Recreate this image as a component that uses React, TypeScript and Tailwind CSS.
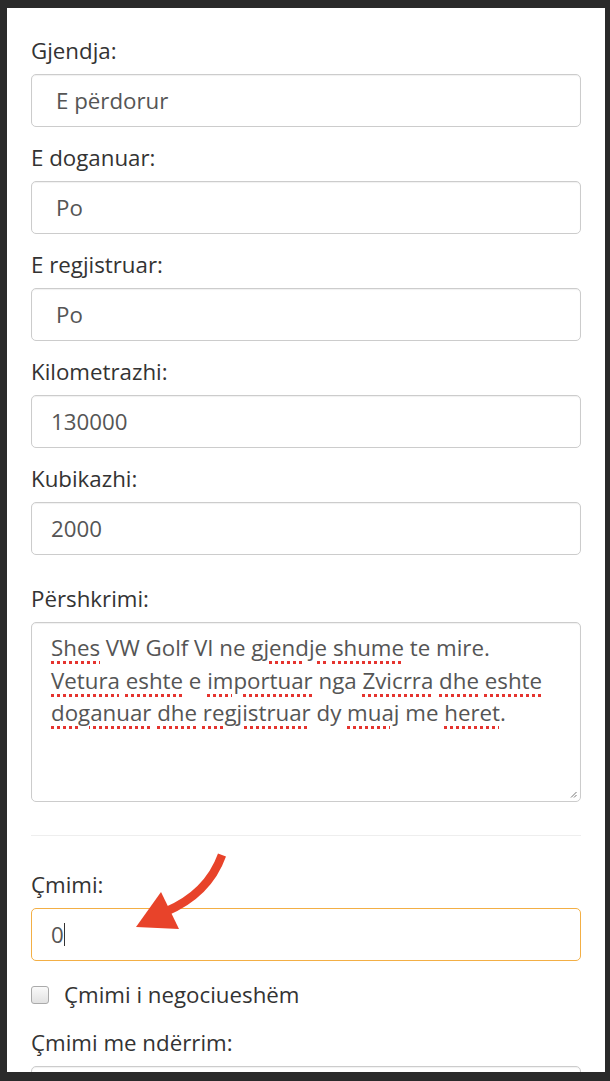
import React from 'react'

const font = { fontFamily: '"Open Sans", "Noto Sans", sans-serif' }

const Label = ({ children, className = '' }: { children: React.ReactNode; className?: string }) => (
  <label className={`block text-[22.3px] leading-[31px] text-[#333] mb-[8px] ${className}`}>{children}</label>
)

const Select = ({ value }: { value: string }) => (
  <div className="h-[53px] rounded-[5px] border border-[#ccc] flex items-center pl-[24px] text-[22.3px] text-[#555] bg-white shadow-[inset_0_1px_1px_rgba(0,0,0,0.06)]">
    {value}
  </div>
)

const Input = ({ value }: { value: string }) => (
  <div className="h-[53px] rounded-[5px] border border-[#ccc] flex items-center pl-[19px] text-[22.3px] text-[#555] bg-white shadow-[inset_0_1px_1px_rgba(0,0,0,0.06)]">
    {value}
  </div>
)

const Typo = ({ children }: { children: React.ReactNode }) => (
  <span className="underline decoration-dotted decoration-[#e5342f] decoration-[3px] underline-offset-[5px]">{children}</span>
)

const Arrow = () => (
  <svg className="absolute left-0 top-0 pointer-events-none" width="610" height="1081" viewBox="0 0 610 1081">
    <path d="M222 855 Q 208 894 165 912" stroke="#e8432a" strokeWidth="8.5" fill="none" strokeLinecap="butt" />
    <polygon points="136,927 161,892 179,929" fill="#e8432a" />
  </svg>
)

const App = () => {
  return (
    <div className="relative h-[1081px] w-[610px] bg-[#2a2a2a] pt-[8px] pl-[7px] pr-[5px] pb-[9px]" style={font}>
      <div className="h-full bg-white overflow-hidden px-[24px] pt-[27px]">
        <Label>Gjendja:</Label>
        <Select value="E përdorur" />

        <Label className="mt-[15px]">E doganuar:</Label>
        <Select value="Po" />

        <Label className="mt-[15px]">E regjistruar:</Label>
        <Select value="Po" />

        <Label className="mt-[15px]">Kilometrazhi:</Label>
        <Input value="130000" />

        <Label className="mt-[15px]">Kubikazhi:</Label>
        <Input value="2000" />

        <Label className="mt-[28px]">Përshkrimi:</Label>
        <div className="relative h-[180px] rounded-[5px] border border-[#ccc] pl-[19px] pr-[16px] pt-[9px] text-[22.3px] leading-[32.5px] text-[#555] shadow-[inset_0_1px_1px_rgba(0,0,0,0.06)]">
          <Typo>Shes</Typo> VW Golf VI ne <Typo>gjendje</Typo> <Typo>shume</Typo> te mire.
          <br />
          <Typo>Vetura</Typo> <Typo>eshte</Typo> e <Typo>importuar</Typo> nga <Typo>Zvicrra</Typo> <Typo>dhe</Typo>{' '}
          <Typo>eshte</Typo>
          <br />
          <Typo>doganuar</Typo> <Typo>dhe</Typo> <Typo>regjistruar</Typo> dy <Typo>muaj</Typo> me <Typo>heret</Typo>.
          <svg className="absolute right-[3px] bottom-[3px]" width="7" height="7" viewBox="0 0 7 7">
            <line x1="1" y1="6.5" x2="6.5" y2="1" stroke="#777" strokeWidth="1" />
            <line x1="4" y1="6.5" x2="6.5" y2="4" stroke="#777" strokeWidth="1" />
          </svg>
        </div>

        <hr className="mt-[33px] border-0 border-t border-[#eee]" />

        <Label className="mt-[33px]">Çmimi:</Label>
        <div className="h-[53px] rounded-[5px] border border-[#f3af45] flex items-center pl-[19px] text-[22.3px] text-[#555] bg-white">
          <span>0</span>
          <span className="inline-block w-px h-[23px] bg-[#333]" />
        </div>

        <div className="mt-[18px] flex items-center h-[31px]">
          <span className="inline-block w-[18px] h-[18px] rounded-[3px] border border-[#aaa] bg-gradient-to-b from-[#fafafa] to-[#e2e2e2]" />
          <span className="ml-[15px] text-[22.3px] leading-[31px] text-[#333]">Çmimi i negociueshëm</span>
        </div>

        <Label className="mt-[17px]">Çmimi me ndërrim:</Label>
        <Input value="" />
      </div>
      <Arrow />
    </div>
  )
}

export default App
